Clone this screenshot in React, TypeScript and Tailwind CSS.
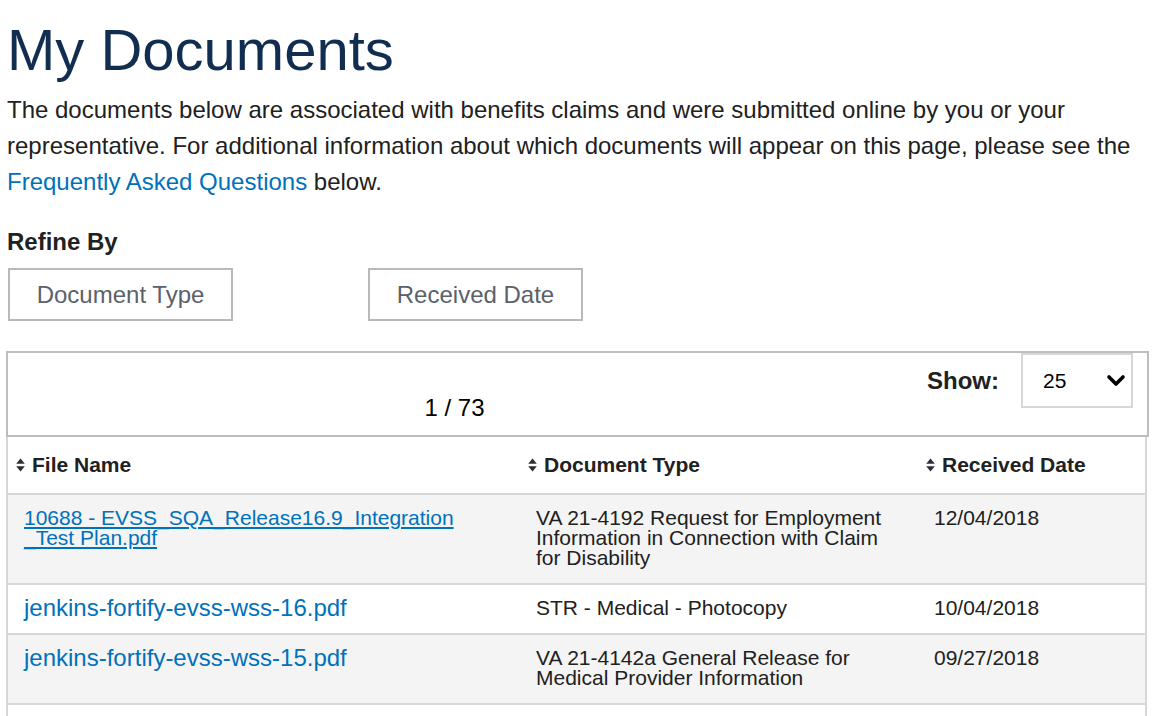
import React from 'react'

const docs = [
  {
    name: (
      <>
        10688 - EVSS_SQA_Release16.9_Integration
        <br />
        _Test Plan.pdf
      </>
    ),
    linkClass: 'block text-[#0071bb] underline',
    type: 'VA 21-4192 Request for Employment Information in Connection with Claim for Disability',
    date: '12/04/2018',
  },
  {
    name: 'jenkins-fortify-evss-wss-16.pdf',
    linkClass: 'block text-[#0071bb] text-[24px] leading-[20px]',
    type: 'STR - Medical - Photocopy',
    date: '10/04/2018',
  },
  {
    name: 'jenkins-fortify-evss-wss-15.pdf',
    linkClass: 'block text-[#0071bb] text-[24px] leading-[20px]',
    type: 'VA 21-4142a General Release for Medical Provider Information',
    date: '09/27/2018',
  },
]

const SortIcon = () => (
  <svg width="9" height="14" viewBox="0 0 9 14" className="shrink-0">
    <path d="M4.5 0.5 L8.8 5.8 H0.2 Z" fill="#2b2f36" />
    <path d="M0.2 8.2 H8.8 L4.5 13.5 Z" fill="#2b2f36" />
  </svg>
)

const Chevron = () => (
  <svg width="20" height="14" viewBox="0 0 20 14">
    <polyline
      points="3,3 10,10 17,3"
      fill="none"
      stroke="#000"
      strokeWidth="3.6"
      strokeLinecap="round"
      strokeLinejoin="round"
    />
  </svg>
)

const App = () => {
  return (
    <div className="w-[1162px] h-[716px] overflow-hidden bg-white font-['Liberation_Sans',Arial,sans-serif] text-[#212121] pl-[7px]">

      {/* Title */}
      <h1 className="mt-[21px] text-[58px] leading-[58px] font-normal text-[#112e51]">
        My Documents
      </h1>

      <p className="mt-[13px] w-[1145px] text-[24px] leading-[36px]">
        The documents below are associated with benefits claims and were submitted online by you or your
        representative. For additional information about which documents will appear on this page, please see the{' '}
        <a className="text-[#0071bb]">Frequently Asked Questions</a> below.
      </p>

      {/* Refine */}
      <div className="mt-[28px] text-[24px] leading-[28px] font-bold">Refine By</div>

      <div className="mt-[12px] ml-px flex gap-[135px]">
        <button className="h-[53px] w-[225px] border-2 border-[#b9b9b9] text-[24px] text-[#5b616b] bg-white">
          Document Type
        </button>
        <button className="h-[53px] w-[215px] border-2 border-[#b9b9b9] text-[24px] text-[#5b616b] bg-white">
          Received Date
        </button>
      </div>

      {/* Toolbar */}
      <div className="mt-[30px] -ml-px w-[1143px] h-[86px] border-2 border-[#bdbdbd] flex">
        <div className="flex-1 flex items-end justify-center pb-[13px]">
          <span className="text-[24px] leading-[28px] text-black">1 / 73</span>
        </div>
        <div className="flex items-start pl-[26px] pr-[14px]">
          <div className="flex items-center gap-[22px]">
            <span className="text-[24px] font-bold">Show:</span>
            <div className="w-[112px] h-[55px] border-2 border-[#d6d7d9] flex items-center justify-between pl-[20px] pr-[5px]">
              <span className="text-[21px] text-black">25</span>
              <Chevron />
            </div>
          </div>
        </div>
      </div>

      {/* Table */}
      <div className="-ml-px w-[1141px] border-x-2 border-[#d6d7d9]">

        <div className="grid grid-cols-[512px_398px_1fr] h-[56px] items-center text-[21px] font-bold">
          <div className="flex items-center gap-[7px] pl-[8px]">
            <SortIcon />
            <span>File Name</span>
          </div>
          <div className="flex items-center gap-[7px] pl-[8px]">
            <SortIcon />
            <span>Document Type</span>
          </div>
          <div className="flex items-center gap-[7px] pl-[8px]">
            <SortIcon />
            <span>Received Date</span>
          </div>
        </div>

        {docs.map((doc, index) => (
          <div
            key={index}
            className={
              index % 2 === 0
                ? 'grid grid-cols-[512px_398px_1fr] border-t-2 border-[#d6d7d9] bg-[#f4f4f4] text-[21px] leading-[20px]'
                : 'grid grid-cols-[512px_398px_1fr] border-t-2 border-[#d6d7d9] bg-white text-[21px] leading-[20px]'
            }
          >
            <div className="px-[16px] pt-[13px] pb-[15px]">
              <a className={doc.linkClass}>{doc.name}</a>
            </div>
            <div className="px-[16px] pt-[13px] pb-[15px]">{doc.type}</div>
            <div className="px-[16px] pt-[13px] pb-[15px]">{doc.date}</div>
          </div>
        ))}

        {/* next row, below the fold */}
        <div className="h-[40px] border-t-2 border-[#d6d7d9] bg-white" />

      </div>

    </div>
  )
}

export default App
